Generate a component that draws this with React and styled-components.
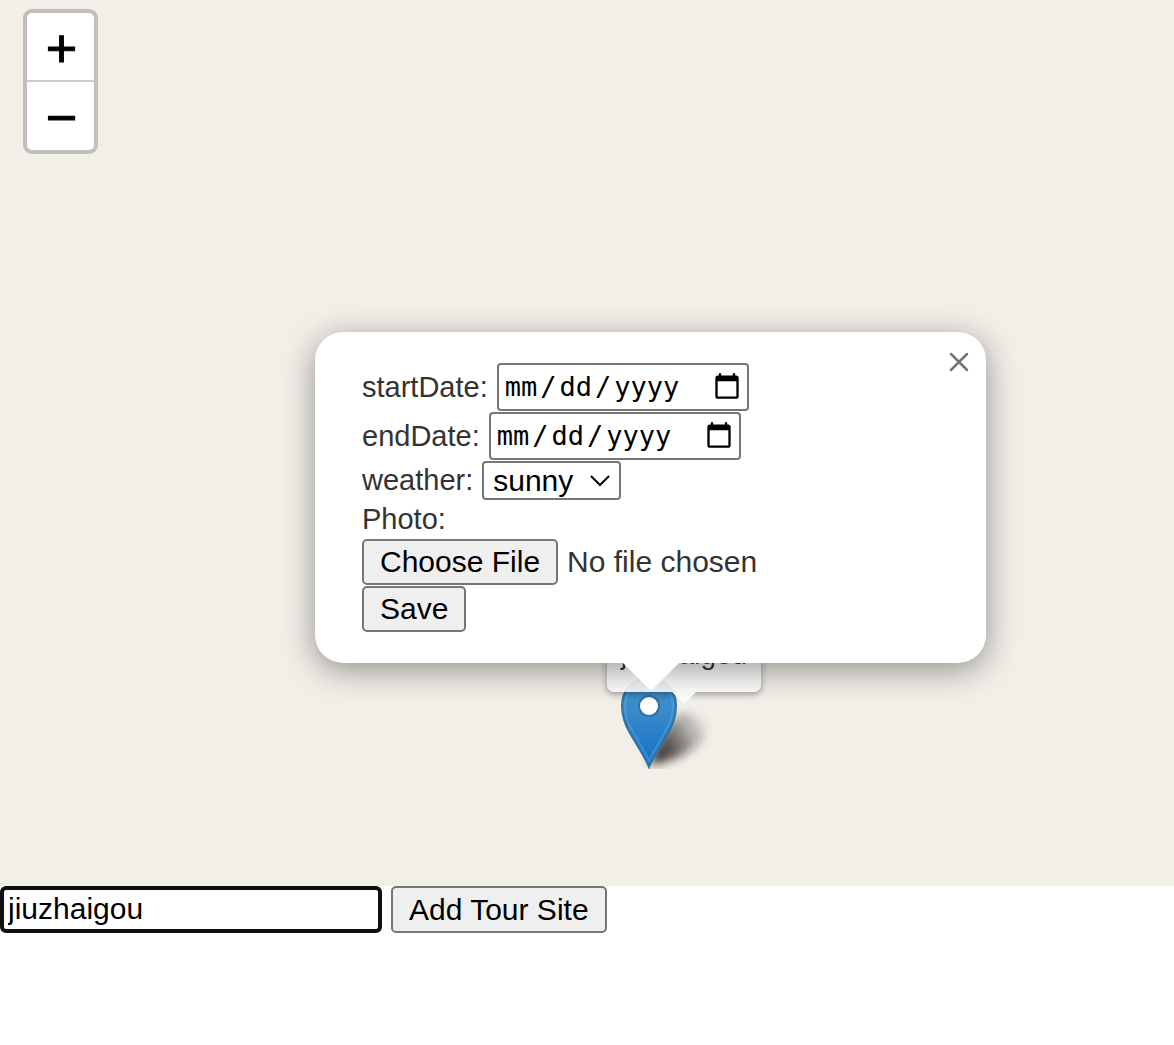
import React from "react";
import styled, { createGlobalStyle } from "styled-components";

const GlobalStyle = createGlobalStyle`
  *, *::before, *::after { box-sizing: border-box; }
  body {
    margin: 0;
    background: #fff;
    font-family: "Liberation Sans", Arial, Helvetica, sans-serif;
  }
`;

const Page = styled.div`
  display: flex;
  flex-direction: column;
  min-height: 100vh;
`;

const MapCanvas = styled.main`
  position: relative;
  flex: 1;
  min-height: 800px;
  overflow: hidden;
  background: #f2efe9;
`;

const ZoomControl = styled.div`
  position: absolute;
  z-index: 5;
  top: 9px;
  left: 23px;
  display: flex;
  flex-direction: column;
  width: 75px;
  border: 4px solid rgba(0, 0, 0, 0.2);
  border-radius: 9px;
  background: #fff;
  background-clip: padding-box;
`;

const ZoomButton = styled.button`
  display: flex;
  align-items: center;
  justify-content: center;
  height: 67px;
  padding: 2px 0 0 2px;
  border: 0;
  background: none;
  color: #000;
  font: 54px/66px "Liberation Sans", Arial, sans-serif;
  -webkit-text-stroke: 1px #000;

  & + & {
    height: 70px;
    border-top: 2px solid #ccc;
  }
`;

/* A zero-size point on the map that its marker, tooltip and popup hang from. */
const Pin = styled.div`
  position: absolute;
  top: ${({ $y }) => $y}px;
  left: ${({ $x }) => $x}px;
`;

const MarkerDrawing = styled.svg`
  position: absolute;
  left: -29px;
  bottom: 0;
  display: block;
`;

const Tooltip = styled.div`
  position: absolute;
  left: -42px;
  bottom: 77px;
  padding: 14px 14px 16px;
  border-radius: 7px;
  background: #fff;
  box-shadow: 0 2px 7px rgba(0, 0, 0, 0.4);
  color: #222;
  font-size: 28px;
  line-height: 42px;
  white-space: nowrap;
  opacity: 0.9;

  &::after {
    content: "";
    position: absolute;
    top: 100%;
    left: 50%;
    margin-left: -12px;
    border: 12px solid transparent;
    border-top-color: #fff;
    border-bottom: 0;
  }
`;

const Popup = styled.section`
  position: absolute;
  left: -334px;
  bottom: 106px;
  width: 671px;
  padding: 31px 47px;
  border-radius: 28px;
  background: #fff;
  box-shadow: 0 7px 33px rgba(0, 0, 0, 0.4);
  color: #333;

  &::after {
    content: "";
    position: absolute;
    top: 100%;
    left: 50%;
    margin-left: -28px;
    border: 28px solid transparent;
    border-top-color: #fff;
    border-bottom: 0;
  }
`;

const CloseButton = styled.button`
  position: absolute;
  top: 16px;
  right: 13px;
  display: flex;
  align-items: center;
  justify-content: center;
  width: 28px;
  height: 28px;
  padding: 0;
  border: 0;
  background: none;
  color: #757575;
`;

const VisitForm = styled.form`
  display: flex;
  flex-direction: column;
  align-items: flex-start;
  gap: 1px;
`;

const Row = styled.div`
  display: flex;
  align-items: center;
  gap: 9px;
`;

const Label = styled.label`
  font-size: 29px;
  line-height: 37px;
`;

const DateInput = styled.input`
  width: 252px;
  height: 48px;
  padding: 0 5px 0 3px;
  border: 2px solid #767676;
  border-radius: 4px;
  background: #fff;
  color: #000;
  font: 27px/40px "DejaVu Sans Mono", monospace;

  &::-webkit-datetime-edit { padding: 0; }
  &::-webkit-datetime-edit-month-field,
  &::-webkit-datetime-edit-day-field,
  &::-webkit-datetime-edit-year-field { padding: 0 3px; }
  &::-webkit-calendar-picker-indicator {
    width: 30px;
    height: 30px;
    padding: 0;
  }
`;

const SelectBox = styled.div`
  position: relative;
  display: flex;
`;

const Select = styled.select`
  width: 139px;
  height: 39px;
  padding: 0 9px;
  border: 2px solid #767676;
  border-radius: 4px;
  appearance: none;
  background: #fff;
  color: #000;
  font: 30px/35px "Liberation Sans", Arial, sans-serif;
`;

const Chevron = styled.svg`
  position: absolute;
  top: 13px;
  right: 11px;
  pointer-events: none;
`;

const FileInput = styled.input`
  height: 46px;
  color: #333;
  font: 30px/42px "Liberation Sans", Arial, sans-serif;

  &::file-selector-button {
    height: 46px;
    margin: 0 9px 0 0;
    padding: 0 16px;
    border: 2px solid #767676;
    border-radius: 5px;
    background: #efefef;
    color: #000;
    font: inherit;
  }
`;

const Button = styled.button`
  height: ${({ $tall }) => ($tall ? 47 : 46)}px;
  padding: 0 16px;
  border: 2px solid #767676;
  border-radius: 5px;
  background: #efefef;
  color: #000;
  font: 30px/42px "Liberation Sans", Arial, sans-serif;
`;

const SiteForm = styled.form`
  display: flex;
  align-items: flex-start;
  gap: 9px;
  padding-bottom: 112px;
`;

const SiteInput = styled.input`
  width: 382px;
  height: 47px;
  padding: 0 4px 2px;
  border: 4px solid #101010;
  border-radius: 6px;
  outline: 0;
  background: #fff;
  color: #000;
  font: 30px/36px "Liberation Sans", Arial, sans-serif;
`;

function Marker() {
  return (
    <MarkerDrawing width="98" height="98" viewBox="0 0 98 98" aria-hidden="true">
      <defs>
        <linearGradient id="pinFill" x1="0" y1="0" x2="0" y2="1">
          <stop offset="0" stopColor="#4295cd" />
          <stop offset="0.35" stopColor="#3a8bcb" />
          <stop offset="1" stopColor="#126fc6" />
        </linearGradient>
        <linearGradient id="shadeFill" x1="32" y1="88" x2="86" y2="58" gradientUnits="userSpaceOnUse">
          <stop offset="0" stopColor="#1c1414" stopOpacity="0.9" />
          <stop offset="0.4" stopColor="#1c1414" stopOpacity="0.65" />
          <stop offset="1" stopColor="#1c1414" stopOpacity="0.05" />
        </linearGradient>
        <filter id="shadeBlur" x="-40%" y="-40%" width="180%" height="180%">
          <feGaussianBlur stdDeviation="5" />
        </filter>
      </defs>
      <path
        d="M30 94C34 78 44 54 58 44C74 38 92 48 86 64C78 80 50 91 30 94Z"
        fill="url(#shadeFill)"
        filter="url(#shadeBlur)"
      />
      <path
        d="M29 96C26 88 18 76 10 62C4 52 2 45 2 35C2 19 13 7 29 7C45 7 56 19 56 35C56 45 54 52 48 62C40 76 32 88 29 96Z"
        fill="url(#pinFill)"
        stroke="#2f74a5"
        strokeWidth="2"
      />
      <path
        d="M29 90C26 83 20 74 13 61C7 51 5 44 5 35C5 21 15 10 29 10C43 10 53 21 53 35C53 44 51 51 45 61C38 74 32 83 29 90Z"
        fill="none"
        stroke="#69afdd"
        strokeOpacity="0.4"
        strokeWidth="2"
      />
      <circle cx="29" cy="35" r="10" fill="#fff" stroke="#2f74a5" strokeWidth="2" />
    </MarkerDrawing>
  );
}

export default function App() {
  return (
    <>
      <GlobalStyle />
      <Page>
        <MapCanvas>
          <ZoomControl>
            <ZoomButton type="button" aria-label="Zoom in">+</ZoomButton>
            <ZoomButton type="button" aria-label="Zoom out">−</ZoomButton>
          </ZoomControl>
          <Pin $x={649} $y={769}>
            <Marker />
            <Tooltip role="tooltip">jiuzhaigou</Tooltip>
            <Popup>
              <VisitForm onSubmit={(e) => e.preventDefault()}>
                <Row>
                  <Label htmlFor="startDate">startDate:</Label>
                  <DateInput id="startDate" type="date" />
                </Row>
                <Row>
                  <Label htmlFor="endDate">endDate:</Label>
                  <DateInput id="endDate" type="date" />
                </Row>
                <Row>
                  <Label htmlFor="weather">weather:</Label>
                  <SelectBox>
                    <Select id="weather" defaultValue="sunny">
                      <option value="sunny">sunny</option>
                    </Select>
                    <Chevron width="20" height="14" viewBox="0 0 20 14" fill="none" stroke="#000" strokeWidth="2">
                      <path d="M1 2L10 11L19 2" />
                    </Chevron>
                  </SelectBox>
                </Row>
                <Label htmlFor="photo">Photo:</Label>
                <FileInput id="photo" type="file" />
                <Button type="submit">Save</Button>
              </VisitForm>
              <CloseButton type="button" aria-label="Close popup">
                <svg width="20" height="20" viewBox="0 0 20 20" fill="none" stroke="currentColor" strokeWidth="2.5" strokeLinecap="round">
                  <path d="M2 2L18 18M18 2L2 18" />
                </svg>
              </CloseButton>
            </Popup>
          </Pin>
        </MapCanvas>
        <SiteForm onSubmit={(e) => e.preventDefault()}>
          <SiteInput type="text" aria-label="Tour site name" defaultValue="jiuzhaigou" />
          <Button type="submit" $tall>Add Tour Site</Button>
        </SiteForm>
      </Page>
    </>
  );
}
